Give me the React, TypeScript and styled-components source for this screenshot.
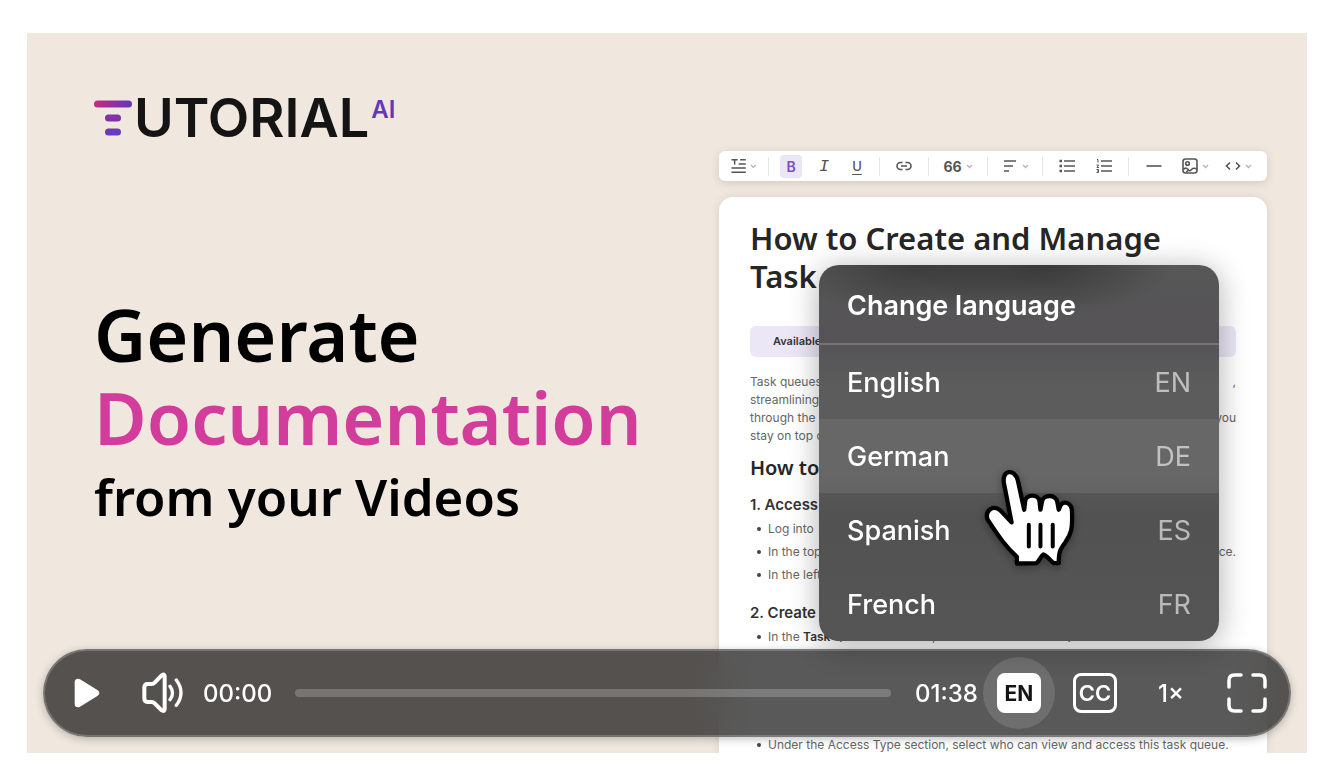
import React from "react";
import styled, { createGlobalStyle } from "styled-components";

const GlobalStyle = createGlobalStyle`
  *, *::before, *::after { box-sizing: border-box; }
  body { margin: 0; background: #fff; font-family: Inter, "Liberation Sans", sans-serif; }
  h1, h2, h3, h4, p, ul { margin: 0; padding: 0; }
  button { font: inherit; color: inherit; border: 0; padding: 0; background: none; cursor: pointer; }
`;

const Page = styled.main`
  padding: 33px 26px 21px 27px;
`;

const Stage = styled.section`
  position: relative;
  display: flex;
  justify-content: space-between;
  aspect-ratio: 16 / 9;
  padding: 0 40px 0 67px;
  overflow: hidden;
  background: #f0e8df;
`;

const Hero = styled.div`
  padding-top: 65px;
`;

const Logo = styled.div`
  display: flex;
  align-items: center;
  gap: 2px;
  height: 40px;
  color: #141414;
`;

const LogoText = styled.span`
  font-size: 54px;
  font-weight: 600;
  line-height: 40px;
`;

const LogoSup = styled.span`
  align-self: flex-start;
  font-size: 24px;
  font-weight: 600;
  line-height: 24px;
  color: #6438b4;
`;

const Headline = styled.h1`
  margin-top: 155px;
  font-family: "Noto Sans", sans-serif;
  font-size: 72px;
  font-weight: 600;
  line-height: 83px;
  color: #000;
`;

const HeadlineLine = styled.span<{ $accent?: boolean; $small?: boolean }>`
  display: block;
  white-space: nowrap;
  color: ${(p) => (p.$accent ? "#d23c9b" : "inherit")};
  font-size: ${(p) => (p.$small ? "51px" : "inherit")};
  line-height: ${(p) => (p.$small ? "74px" : "inherit")};
`;

const Editor = styled.div`
  display: flex;
  flex-direction: column;
  gap: 16px;
  width: 548px;
  min-height: 0;
  padding-top: 118px;
`;

const Toolbar = styled.div`
  display: flex;
  flex: none;
  align-items: center;
  gap: 11px;
  height: 30px;
  padding: 0 12px;
  border-radius: 6px;
  background: #fff;
  box-shadow: 0 2px 8px rgba(60, 40, 20, 0.16);
  color: #555;
`;

const Tool = styled.button<{ $width?: number; $active?: boolean }>`
  display: flex;
  flex: none;
  align-items: center;
  justify-content: center;
  gap: 4px;
  width: ${(p) => p.$width ?? 26}px;
  height: 23px;
  border-radius: 4px;
  font-size: 14px;
  font-weight: 600;
  background: ${(p) => (p.$active ? "#ebe6f7" : "transparent")};
  color: ${(p) => (p.$active ? "#7450c0" : "inherit")};
`;

const Italic = styled.i`
  font-family: "Liberation Mono", monospace;
  font-size: 17px;
  font-weight: 400;
`;

const Underline = styled.span`
  font-size: 13px;
  font-weight: 500;
  text-decoration: underline;
  text-underline-offset: 3px;
`;

const QuoteMark = styled.span`
  font-size: 14px;
  font-weight: 700;
`;

const Separator = styled.span`
  flex: none;
  width: 1px;
  height: 19px;
  background: #e6e6e6;
`;

const Sheet = styled.article`
  flex: 1;
  min-height: 0;
  padding: 22px 31px 0;
  overflow: hidden;
  border-radius: 14px 14px 0 0;
  background: #fff;
  box-shadow: 0 0 8px rgba(60, 40, 20, 0.12);
  color: #666;
  font-size: 12px;
  line-height: 18px;
  white-space: nowrap;
`;

const DocTitle = styled.h2`
  font-family: "Noto Sans", sans-serif;
  font-size: 31px;
  font-weight: 600;
  line-height: 38px;
  color: #262626;
`;

const Note = styled.p`
  height: 31px;
  margin-top: 31px;
  padding: 0 23px;
  border-radius: 6px;
  background: #ebe7f6;
  color: #333;
  font-size: 11px;
  font-weight: 600;
  line-height: 31px;
`;

const Intro = styled.div`
  margin-top: 16px;
`;

const SplitLine = styled.p`
  display: flex;
  justify-content: space-between;
  flex: 1;
`;

const DocHeading = styled.h3`
  margin-top: 9px;
  font-family: "Noto Sans", sans-serif;
  font-size: 20px;
  font-weight: 600;
  line-height: 28px;
  color: #262626;
`;

const StepHeading = styled.h4<{ $first?: boolean }>`
  margin-top: ${(p) => (p.$first ? 11 : 15)}px;
  font-size: 15px;
  font-weight: 600;
  line-height: 24px;
  color: #333;
`;

const StepList = styled.ul`
  padding-left: 7px;
  line-height: 23px;
  list-style: none;
  & + & { margin-top: 85px; }
`;

const StepItem = styled.li`
  display: flex;
  align-items: center;
  &::before {
    content: "";
    width: 4px;
    height: 4px;
    margin-right: 7px;
    border-radius: 2px;
    background: #444;
  }
  b { color: #333; font-weight: 600; }
`;

const Overlay = styled.div`
  position: absolute;
  right: 16px;
  bottom: 16px;
  left: 16px;
  display: flex;
  flex-direction: column;
  gap: 8px;
`;

const Menu = styled.div`
  position: relative;
  z-index: 1;
  align-self: flex-end;
  width: 400px;
  margin-right: 72px;
  border-radius: 20px;
  background:
    radial-gradient(ellipse 130px 50px at 24% 0, rgba(50, 50, 50, 0.75), rgba(50, 50, 50, 0)),
    radial-gradient(ellipse 130px 50px at 56% 0, rgba(50, 50, 50, 0.8), rgba(50, 50, 50, 0)),
    linear-gradient(#575757, #555356 20%, #5c5c5c 32%, #5b5b5b 55%, #525252 66%, #555 100%);
  box-shadow: 0 4px 30px rgba(0, 0, 0, 0.32);
  color: #fff;
`;

const MenuTitle = styled.h2`
  height: 80px;
  padding: 2px 28px 0;
  border-bottom: 2px solid rgba(255, 255, 255, 0.18);
  font-size: 27px;
  font-weight: 600;
  line-height: 78px;
`;

const MenuItem = styled.button<{ $hovered?: boolean }>`
  display: flex;
  align-items: center;
  justify-content: space-between;
  width: 100%;
  height: 74px;
  padding: 1px 28px 0;
  background: ${(p) => (p.$hovered ? "rgba(255, 255, 255, 0.08)" : "none")};
  font-size: 27px;
  font-weight: 500;
  line-height: 32px;
`;

const LangCode = styled.span`
  font-weight: 400;
  color: rgba(255, 255, 255, 0.6);
`;

const Pointer = styled.svg`
  position: absolute;
  top: 203px;
  left: 164px;
  filter: drop-shadow(0 2px 4px rgba(0, 0, 0, 0.35));
  pointer-events: none;
`;

const Controls = styled.div`
  display: flex;
  align-items: center;
  gap: 4px;
  height: 88px;
  padding: 0 6px;
  border: 2px solid rgba(255, 255, 255, 0.2);
  border-radius: 44px;
  background: rgba(0, 0, 0, 0.65);
  backdrop-filter: blur(20px);
  box-shadow: 0 2px 8px rgba(0, 0, 0, 0.25);
  color: #fff;
  font-size: 24px;
  font-weight: 500;
`;

const ControlButton = styled.button<{ $active?: boolean }>`
  display: flex;
  flex: none;
  align-items: center;
  justify-content: center;
  width: 72px;
  height: 72px;
  border-radius: 36px;
  background: ${(p) => (p.$active ? "rgba(255, 255, 255, 0.12)" : "none")};
`;

const Time = styled.span<{ $width: number }>`
  width: ${(p) => p.$width}px;
  white-space: nowrap;
  font-size: 24px;
`;

const Seek = styled.input`
  flex: 1;
  min-width: 0;
  height: 8px;
  margin: 0 20px;
  appearance: none;
  border-radius: 4px;
  background: rgba(255, 255, 255, 0.2);
  &::-webkit-slider-thumb { appearance: none; width: 0; height: 0; }
`;

const Badge = styled.span<{ $outlined?: boolean }>`
  display: flex;
  align-items: center;
  justify-content: center;
  width: 44px;
  height: 40px;
  border: 3px solid #fff;
  border-radius: 8px;
  background: ${(p) => (p.$outlined ? "none" : "#fff")};
  color: ${(p) => (p.$outlined ? "#fff" : "#141414")};
  font-size: ${(p) => (p.$outlined ? 22 : 21)}px;
  font-weight: ${(p) => (p.$outlined ? 600 : 700)};
`;

const Chevron = () => (
  <svg width="7" height="5" viewBox="0 0 7 5" fill="none" stroke="#b5b5b5" strokeWidth="1.3">
    <path d="M1 1l2.5 2.5L6 1" />
  </svg>
);

const LogoMark = () => (
  <svg width="38" height="36" viewBox="0 0 38 36">
    <defs>
      <linearGradient id="mark" x1="0" x2="1">
        <stop offset="0" stopColor="#c62a80" />
        <stop offset="1" stopColor="#6236bc" />
      </linearGradient>
    </defs>
    <rect width="38" height="7" y="0.5" rx="3.5" fill="url(#mark)" />
    <rect x="11" y="14.5" width="16" height="7" rx="3.5" fill="#8230a6" />
    <rect x="11" y="28.5" width="16" height="7" rx="3.5" fill="#6c38bc" />
  </svg>
);

const languages = [
  { name: "English", code: "EN" },
  { name: "German", code: "DE" },
  { name: "Spanish", code: "ES" },
  { name: "French", code: "FR" },
];

function EditorToolbar() {
  const icon = { width: 16, height: 16, viewBox: "0 0 16 16", fill: "none", stroke: "currentColor", strokeWidth: 1.6 };
  return (
    <Toolbar>
      <Tool aria-label="Text style">
        <svg {...icon}>
          <path d="M0.5 1.500h6.500M3.800 1.500V6.500M9.500 1.500H15.500M8 6h7.500M0.500 10.200h15M0.500 14.500h15" />
        </svg>
        <Chevron />
      </Tool>
      <Separator />
      <Tool $width={22} $active>B</Tool>
      <Tool $width={22}><Italic>I</Italic></Tool>
      <Tool $width={22}><Underline>U</Underline></Tool>
      <Separator />
      <Tool aria-label="Link">
        <svg {...icon}>
          <path d="M6.500 4.500H4.500a3.500 3.500 0 0 0 0 7h2M9.500 4.500h2a3.500 3.500 0 0 1 0 7h-2M5 8h6" />
        </svg>
      </Tool>
      <Separator />
      <Tool $width={36}>
        <QuoteMark>66</QuoteMark>
        <Chevron />
      </Tool>
      <Separator />
      <Tool $width={32} aria-label="Align">
        <svg {...icon}>
          <path d="M2 3h12M2 8h9M2 13h5" />
        </svg>
        <Chevron />
      </Tool>
      <Separator />
      <Tool aria-label="Bulleted list">
        <svg {...icon}>
          <path d="M5 3h11M5 8h11M5 13h11" />
          <path d="M0.500 3h2.500M0.500 8h2.500M0.500 13h2.500" strokeWidth="2.500" />
        </svg>
      </Tool>
      <Tool aria-label="Numbered list">
        <svg {...icon}>
          <path d="M5 3h11M5 8h11M5 13h11" />
          <path d="M1 1.500h1v3M0.500 7h2l-1.500 2.500h2M0.500 11.500h2v3h-2M1 13h1.500" strokeWidth="1" />
        </svg>
      </Tool>
      <Separator />
      <Tool $width={28} aria-label="Divider">
        <svg {...icon}>
          <path d="M0.500 8h15" />
        </svg>
      </Tool>
      <Tool $width={32} aria-label="Image">
        <svg {...icon}>
          <rect x="1" y="1" width="14" height="14" rx="2.500" />
          <circle cx="5.500" cy="5.500" r="1.800" />
          <path d="M1.500 11.500c2-2.500 4-1 5 .5s2 .5 3-.5 3-2 5.500 0M4 14.500l2-2" />
        </svg>
        <Chevron />
      </Tool>
      <Tool $width={32} aria-label="Code">
        <svg {...icon}>
          <path d="M5 4.500L1.500 8 5 11.500M11 4.500L14.500 8 11 11.500" />
        </svg>
        <Chevron />
      </Tool>
    </Toolbar>
  );
}

function DocSheet() {
  return (
    <Sheet>
      <DocTitle>How to Create and Manage<br />Task Queues in HubSpot</DocTitle>
      <Note>Available</Note>
      <Intro>
        <SplitLine><span>Task queues</span><span>,</span></SplitLine>
        <SplitLine>streamlining</SplitLine>
        <SplitLine><span>through the</span><span>you</span></SplitLine>
        <SplitLine>stay on top of</SplitLine>
      </Intro>
      <DocHeading>How to</DocHeading>
      <StepHeading $first>1. Access</StepHeading>
      <StepList>
        <StepItem>Log into</StepItem>
        <StepItem><SplitLine><span>In the top</span><span>ce.</span></SplitLine></StepItem>
        <StepItem>In the left</StepItem>
      </StepList>
      <StepHeading>2. Create</StepHeading>
      <StepList>
        <StepItem>
          <span>In the <b>Task Queues</b> interface, click the <b>Create Task Queue</b> button.</span>
        </StepItem>
      </StepList>
      <StepList>
        <StepItem>Under the Access Type section, select who can view and access this task queue.</StepItem>
      </StepList>
    </Sheet>
  );
}

function LanguageMenu() {
  return (
    <Menu>
      <MenuTitle>Change language</MenuTitle>
      {languages.map((l) => (
        <MenuItem key={l.code} $hovered={l.code === "DE"}>
          {l.name}
          <LangCode>{l.code}</LangCode>
        </MenuItem>
      ))}
      <Pointer width="93" height="100" viewBox="70 55 280 300" stroke="#000" strokeWidth="13" strokeLinejoin="round" strokeLinecap="round">
        <path
          fill="#fff"
          d="M156 218L133 100C126 58 166 56 175 92L194 180L197 154C200 132 237 132 240 154L243 180L248 154C252 134 290 132 294 158L298 180L303 168C310 152 337 156 338 185C340 238 335 254 318 278C300 302 298 310 298 341L284 341C274 337 266 320 252 315C244 318 240 337 230 341L172 342L172 322C138 290 122 268 84 210C74 184 100 164 122 182Z"
        />
        <path fill="none" strokeWidth="12" d="M208 225v66M243 225v66M280 225v66" />
      </Pointer>
    </Menu>
  );
}

function PlayerControls() {
  return (
    <Controls>
      <ControlButton aria-label="Play">
        <svg width="26" height="30" viewBox="132 114 78 90" fill="#fff">
          <path d="M134 127C134 117 142 114 150 118L202 150C210 155 210 163 202 168L150 200C142 204 134 201 134 191Z" />
        </svg>
      </ControlButton>
      <ControlButton aria-label="Volume">
        <svg width="44" height="42" viewBox="334 96 132 126" fill="none" stroke="#fff" strokeWidth="12" strokeLinecap="round" strokeLinejoin="round">
          <path d="M344 143Q344 132 354 132H366Q371 132 375 128L396 106Q405 100 405 110V206Q405 216 396 211L375 190Q371 186 366 186H354Q344 186 344 175Z" />
          <path d="M421 139Q436 159 421 179M440 120Q468 158 440 196" strokeWidth="10" />
        </svg>
      </ControlButton>
      <Time $width={68}>00:00</Time>
      <Seek type="range" min="0" max="98" defaultValue="0" aria-label="Seek" />
      <Time $width={64}>01:38</Time>
      <ControlButton $active aria-label="Change language">
        <Badge>EN</Badge>
      </ControlButton>
      <ControlButton aria-label="Captions">
        <Badge $outlined>CC</Badge>
      </ControlButton>
      <ControlButton>1×</ControlButton>
      <ControlButton aria-label="Full screen">
        <svg width="42" height="42" viewBox="0 0 42 42" fill="none" stroke="#fff" strokeWidth="3.500" strokeLinecap="round">
          <path d="M3 15V8.500Q3 3 8.500 3H15M27 3h6.500Q39 3 39 8.500V15M39 27v6.500Q39 39 33.500 39H27M15 39H8.500Q3 39 3 33.500V27" />
        </svg>
      </ControlButton>
    </Controls>
  );
}

export default function App() {
  return (
    <>
      <GlobalStyle />
      <Page>
        <Stage>
          <Hero>
            <Logo>
              <LogoMark />
              <LogoText>UTORIAL</LogoText>
              <LogoSup>AI</LogoSup>
            </Logo>
            <Headline>
              <HeadlineLine>Generate</HeadlineLine>
              <HeadlineLine $accent>Documentation</HeadlineLine>
              <HeadlineLine $small>from your Videos</HeadlineLine>
            </Headline>
          </Hero>
          <Editor>
            <EditorToolbar />
            <DocSheet />
          </Editor>
          <Overlay>
            <LanguageMenu />
            <PlayerControls />
          </Overlay>
        </Stage>
      </Page>
    </>
  );
}
